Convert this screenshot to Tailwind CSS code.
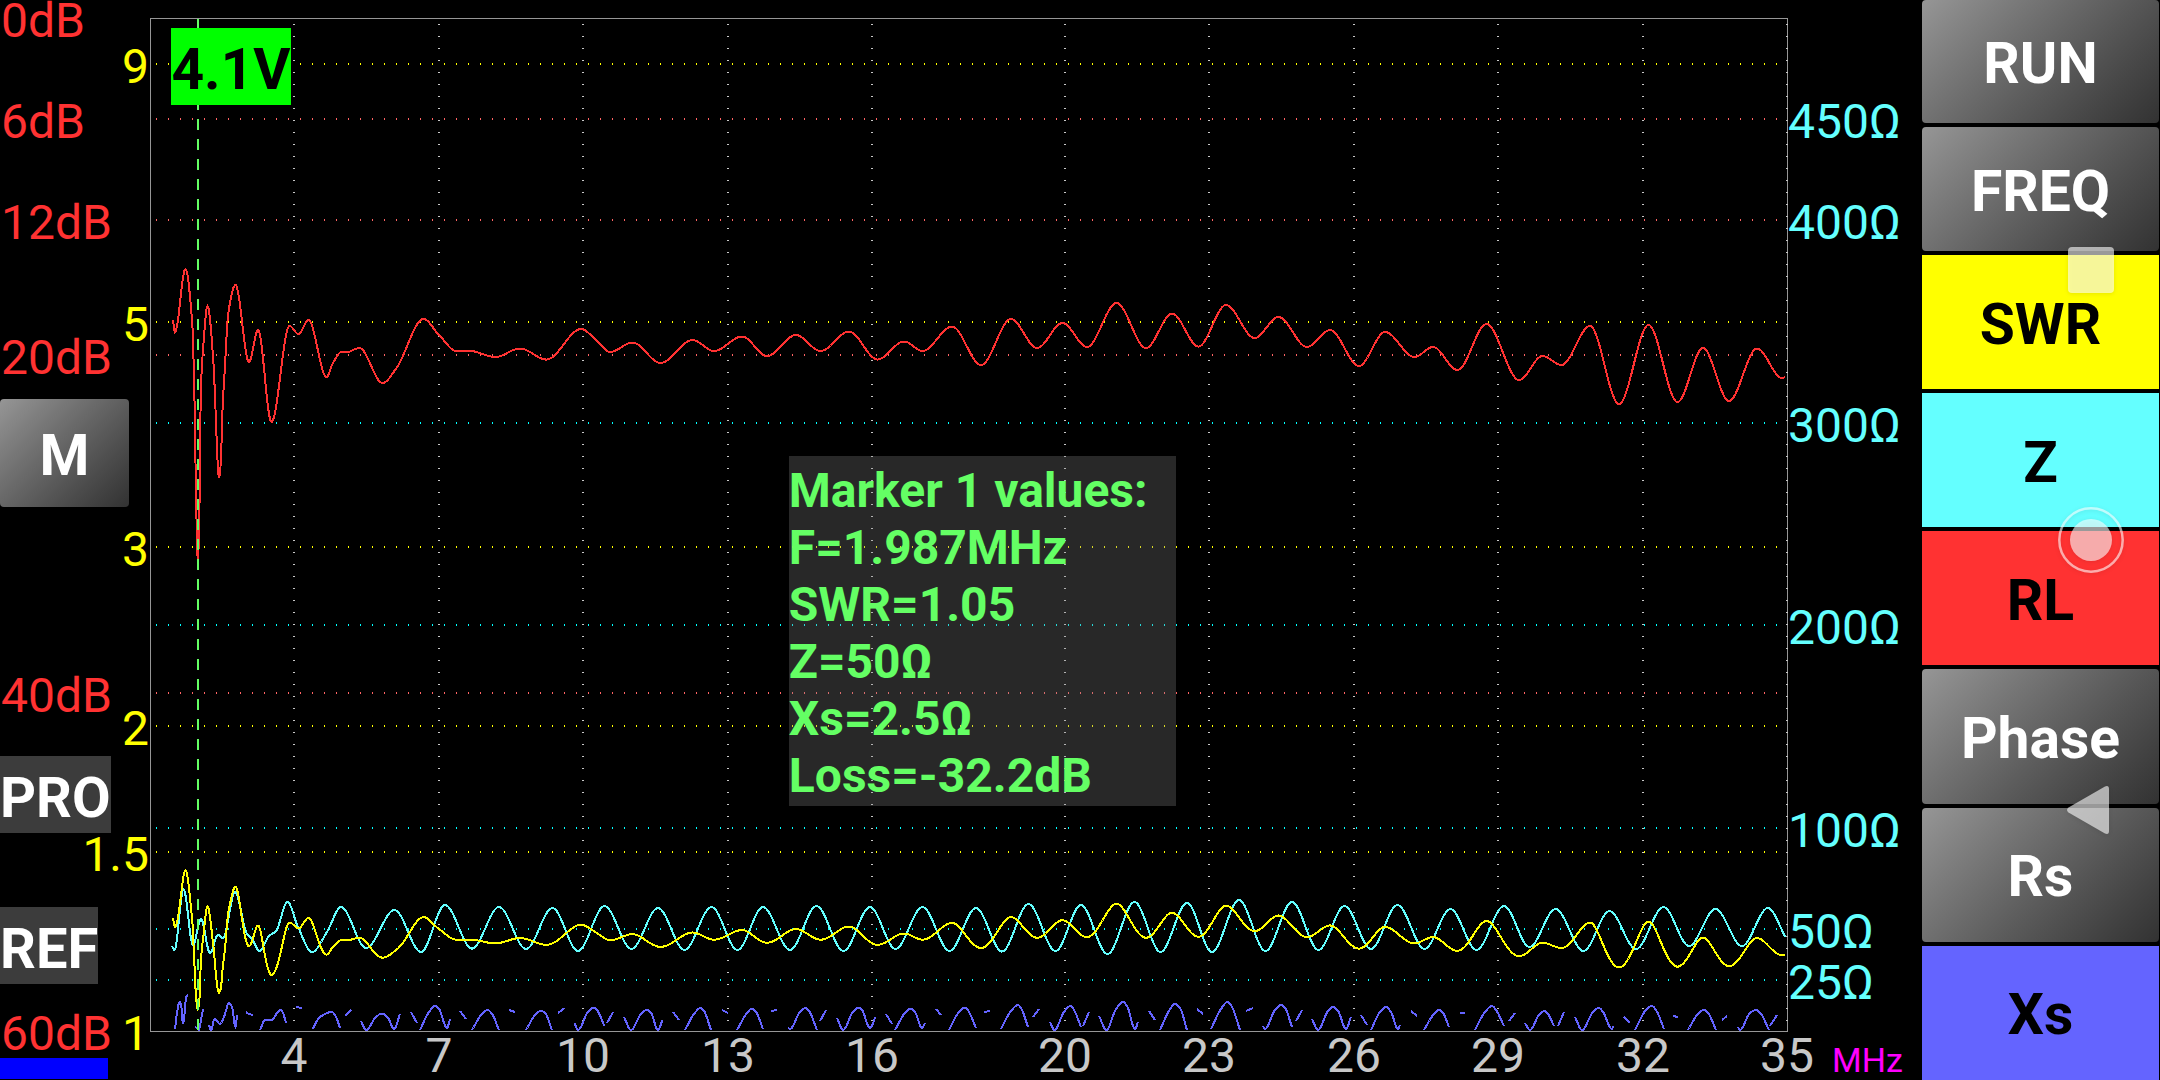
<!DOCTYPE html>
<html lang="en">
<head>
<meta charset="utf-8">
<meta name="viewport" content="width=device-width, initial-scale=1">
<title>Antenna analyzer</title>
<script src="https://cdn.jsdelivr.net/npm/@tailwindcss/browser@4"></script>
</head>
<body class="bg-black font-['Roboto',sans-serif] text-5xl leading-none text-white">
<main class="relative flex h-screen overflow-hidden">

  <!-- Left gutter: return loss scale, SWR scale, mode buttons -->
  <aside class="relative grid w-[150px] shrink-0 grid-rows-[399fr_108px_249fr_77px_74fr_77px_74fr_21px_1fr] justify-items-start">
    <div id="loss-scale" class="absolute inset-x-0 top-[18px] bottom-[49px] text-[#ff3232]"></div>
    <div id="swr-scale" class="absolute inset-x-0 top-[18px] bottom-[49px] text-[#ffff00]"></div>
    <button type="button" class="row-start-2 w-[129px] rounded-sm bg-linear-135 from-[#969696] to-[#323232] pt-1 text-[57px] font-bold">M</button>
    <button type="button" class="relative row-start-4 bg-[#3c3c3c] pt-1.5 text-[56px] font-bold">PRO</button>
    <button type="button" class="relative row-start-6 bg-[#3c3c3c] pt-1.5 text-[56px] font-bold">REF</button>
    <div class="row-start-8 w-[108px] bg-[#0000ff]"></div>
  </aside>

  <!-- Plot and frequency axis -->
  <section class="flex min-w-0 grow flex-col pt-[18px]">
    <div class="relative min-h-0 grow">
      <svg id="plot" class="absolute inset-0 size-full" viewBox="150 18 1638 1014" preserveAspectRatio="none" fill="none" shape-rendering="crispEdges" role="img" aria-label="SWR, impedance, return loss and reactance against frequency">
        <rect x="150.5" y="18.5" width="1637" height="1013" stroke="#969696"/>
        <g id="grid" stroke-width="2" stroke-dasharray="1 11"></g>
        <path id="xs" stroke="#6464ff" stroke-width="2"/>
        <path id="z" stroke="#64ffff" stroke-width="2"/>
        <path id="swr" stroke="#ffff00" stroke-width="2"/>
        <path id="rl" stroke="#ff3232" stroke-width="2"/>
        <path d="M198 19V1031" stroke="#64ff64" stroke-width="2" stroke-dasharray="11 9"/>
      </svg>
      <div class="absolute top-[10px] left-[21px] flex h-[77px] w-[120px] items-center justify-center bg-[#00ff00] pt-1.5 text-[57px] font-bold text-black">4.1V</div>
      <div class="absolute top-[43.2%] left-[39%] w-[387px] bg-[#808080]/31 pt-1.5 pb-0.5 leading-[57px] font-bold whitespace-nowrap text-[#64ff64]">
        <p>Marker 1 values:</p>
        <p>F=1.987MHz</p>
        <p>SWR=1.05</p>
        <p>Z=50Ω</p>
        <p>Xs=2.5Ω</p>
        <p>Loss=-32.2dB</p>
      </div>
    </div>
    <div id="freq-scale" class="relative h-12 shrink-0 text-[#c8c8c8]"></div>
  </section>

  <!-- Impedance scale -->
  <aside class="relative flex w-[134px] shrink-0 flex-col justify-end pl-[44px]">
    <div id="ohm-scale" class="absolute inset-x-0 top-[18px] bottom-[49px] text-[#64ffff]"></div>
    <span class="text-[34px] leading-[40px] text-[#ff00ff]">MHz</span>
  </aside>

  <!-- Commands and trace toggles -->
  <nav class="flex w-[238px] shrink-0 flex-col gap-1 pr-px text-[57px] font-bold">
    <button type="button" class="grow-[123] basis-0 rounded-sm bg-linear-135 from-[#969696] to-[#323232] pt-1">RUN</button>
    <button type="button" class="grow-[123] basis-0 rounded-sm bg-linear-135 from-[#969696] to-[#323232] pt-1">FREQ</button>
    <button type="button" class="grow-[134] basis-0 bg-[#ffff00] pt-1 text-black">SWR</button>
    <button type="button" class="grow-[134] basis-0 bg-[#64ffff] pt-1 text-black">Z</button>
    <button type="button" class="grow-[134] basis-0 bg-[#ff3232] pt-1 text-black">RL</button>
    <button type="button" class="grow-[134] basis-0 rounded-sm bg-linear-135 from-[#969696] to-[#323232] pt-1">Phase</button>
    <button type="button" class="grow-[134] basis-0 rounded-sm bg-linear-135 from-[#969696] to-[#323232] pt-1">Rs</button>
    <button type="button" class="grow-[134] basis-0 bg-[#6464ff] pt-1 text-black">Xs</button>
  </nav>

  <!-- Translucent system navigation over the right edge -->
  <div class="absolute inset-y-0 right-[35px] flex w-[68px] flex-col justify-center">
    <button type="button" aria-label="Recent apps" class="flex h-1/4 items-center justify-center">
      <svg class="h-[68px] w-[68px] drop-shadow-sm" viewBox="0 0 68 68"><rect x="11" y="11" width="46" height="46" rx="4" fill="#fff" fill-opacity=".6"/></svg>
    </button>
    <button type="button" aria-label="Home" class="flex h-1/4 items-center justify-center">
      <svg class="h-[68px] w-[68px] drop-shadow-sm" viewBox="0 0 68 68"><circle cx="34" cy="34" r="31.700" fill="none" stroke="#fff" stroke-opacity=".6" stroke-width="2.500"/><circle cx="34" cy="34" r="21" fill="#fff" fill-opacity=".6"/></svg>
    </button>
    <button type="button" aria-label="Back" class="flex h-1/4 items-center justify-center">
      <svg class="h-[68px] w-[68px] drop-shadow-sm" viewBox="0 0 68 68"><path d="M48 10.500Q52 9 52 13V55Q52 59 48 57.500L11.500 36.500Q8.500 34 11.500 31.500Z" fill="#fff" fill-opacity=".6"/></svg>
    </button>
  </div>
</main>

<script>
const LEFT = 150, TOP = 18, WIDTH = 1638, HEIGHT = 1013, BASE = 1031;

// Turning points of each trace, as x, y pairs in plot units
const rl = [173,320, 175,332, 185.5,269, 192,320, 194.3,390, 196,490, 197.8,561, 199.3,520, 200,450, 201,387, 203,350, 207.5,306,
  213.3,360, 216,423, 217.5,460, 219,478, 221,460, 222.3,415, 225,365, 228.3,313, 235.5,285, 249,362, 258,330, 271.5,422, 289.5,326, 298.5,334,
  308.5,320, 326.5,377, 333,363, 341.5,352, 347,352, 359.5,348, 382.5,383, 396.5,368, 423.5,319, 439,335, 456.5,351, 470,351, 495.5,357,
  520,348.5, 546.5,359.5, 581,329, 596,340, 610,352, 632.5,342.5, 660.5,363, 692.5,340, 714,351, 742,336.5, 767,356, 796,335,
  820.5,351, 849,331.5, 877.5,359.5, 904,341.5, 922.5,351, 952,326.5, 981,365, 1011,319, 1037,348, 1062.5,323, 1087,347,
  1116.5,303, 1146,348, 1172,313.5, 1198.5,346.5, 1226,305, 1254.5,338, 1278.5,317, 1307,347, 1330,330, 1359,366, 1385,332,
  1414.5,357, 1433,347, 1457.5,370, 1486.5,324, 1519,380, 1542.5,356, 1561.5,365, 1590,326, 1619,404, 1648.5,325, 1677.5,402,
  1703,348, 1729,401, 1757,348.5, 1782,378, 1785,377];
const z = [172,946, 174.5,950, 183.5,889, 193,945, 201,919, 210,953, 218,935, 223,938, 235,892, 247,934, 252,939, 259.5,951, 269,936,
  276,931, 287.5,902, 298,927, 312,952, 327,932, 341,907, 366,948, 394.5,910, 421,952, 445,905, 472,948.5, 499,907, 526,949,
  552.5,908, 578,951, 604.5,906, 631.5,949, 658,908, 684.5,950, 711.5,907, 737.5,950, 763,907, 790,950, 816.5,906, 843.5,951,
  870,907, 895.5,949, 922.5,907, 949.5,951, 976,908, 1002,951.5, 1028.5,904, 1055.5,951, 1081,905, 1107.5,954, 1134.5,902,
  1160.5,952, 1187,903, 1212,952, 1239,900, 1265.5,951, 1292,902, 1318.5,950, 1344.5,906, 1371,949, 1397.5,905, 1424.5,949,
  1450.5,909, 1476.5,950, 1504,906, 1529.5,947, 1555.5,909, 1583.5,951, 1609.5,911, 1636,949, 1663.5,907, 1689,946, 1715.5,909,
  1742,946, 1768,908, 1785.5,937];
// Reactance is drawn in separate strokes
const xs = [
  [175,1029, 177,1013, 179.5,1002, 181,1004, 183,1024, 185,1009, 186,997, 188,995], [195,1027, 197,1028], [199,1031, 201,1020, 203,1009],
  [209,1025, 211,1030, 214.5,1019, 220,1024, 224,1017, 229,1003, 232,1007, 235.5,1027, 237,1015], [246,1012, 249,1014, 253,1015],
  [260,1030, 265,1020, 271,1020, 280.5,1010, 283,1013, 286,1023], [296,1007, 302,1008], [312.5,1029, 320,1017, 332,1012, 336,1017, 340,1028],
  [345,1016, 351,1010], [361,1021, 366,1030, 376,1017, 382,1013.5, 388,1018, 394,1029, 400,1014], [411,1012, 417,1023],
  [420,1030, 429,1012, 435,1006, 439,1009, 447,1028, 450,1019], [460,1011, 466,1019], [472,1030, 482,1014, 487.5,1010, 492,1014, 499,1030],
  [509,1010, 515,1012], [526,1030, 536,1014, 541,1011, 545,1013, 552,1030], [558,1013, 564.5,1008],
  [574.5,1023, 578,1030, 588,1012, 594,1007.5, 597,1010, 604.5,1026], [607,1023, 613,1012],
  [624,1017, 631,1030, 641,1014, 647,1010, 651,1013, 658,1030, 662.5,1020], [673,1012, 679,1020],
  [685,1030, 694,1014, 700.5,1008, 704,1011, 711,1030], [722,1010, 728,1013], [737,1030, 747,1013, 752,1008.5, 756,1012, 763,1029],
  [771,1011, 777,1010], [788,1028, 790,1029, 800,1012, 805.5,1008, 809,1011, 817,1030], [820,1021, 826,1010],
  [837,1018, 843,1030, 853,1012, 859,1007.5, 862,1010, 870,1028, 875.5,1017], [886,1014, 892,1024],
  [895,1030, 905,1013, 911,1008.5, 915,1012, 922,1028, 925,1023], [936,1009, 941,1015], [949,1030, 959,1012, 965,1007.5, 969,1012, 976,1028],
  [984,1012, 990,1011], [1001,1029, 1011,1011, 1018,1005, 1021,1008, 1028,1027], [1033,1017, 1039,1009],
  [1050,1022, 1054.5,1030, 1064,1012, 1070.5,1006, 1074,1010, 1081,1027], [1083,1026, 1089,1012],
  [1099,1016, 1106.5,1030, 1116,1009, 1123,1002, 1127,1006, 1135,1029, 1138,1022], [1149,1011, 1155,1020],
  [1160,1030, 1169,1011, 1175,1004, 1180,1008, 1187,1030], [1197,1009, 1203,1014], [1211,1029, 1221,1009, 1227.5,1002, 1232,1007, 1240,1030],
  [1246,1011, 1253,1008], [1263,1026, 1265,1029, 1275,1010, 1281,1005, 1285,1008, 1292,1027], [1296,1021, 1302,1010],
  [1312,1019, 1318,1030, 1328,1011, 1333,1007, 1338,1011, 1346,1029, 1351,1017], [1361,1015, 1367,1025],
  [1371,1030, 1380,1012, 1386,1007, 1391,1012, 1398,1029, 1400,1025], [1411,1011, 1417,1016],
  [1424,1030, 1434,1014, 1439,1010, 1443,1013, 1449,1027], [1460,1013, 1465,1013], [1475,1030, 1485,1012, 1492,1006, 1496,1010, 1504,1026],
  [1509,1021, 1515,1013], [1525,1023, 1530,1030, 1539,1015, 1544.5,1011, 1548,1014, 1554,1026], [1558,1026, 1564,1012],
  [1575,1017, 1582,1030, 1593,1012, 1599,1008, 1603,1012, 1612,1029, 1613,1026], [1624,1017, 1630,1023],
  [1635,1030, 1646,1010, 1652,1006, 1656,1010, 1664,1029], [1673,1016, 1678,1017], [1688,1030, 1698,1014, 1704,1010, 1708,1013, 1716,1030],
  [1722,1020, 1727,1016], [1738,1027, 1740,1030, 1750,1013, 1756,1010, 1761,1014, 1769,1030], [1770,1026, 1777,1015]];

// Monotone cubic interpolation, sampled every half unit
function sample(flat) {
  const p = [];
  for (let i = 0; i < flat.length; i += 2) p.push([flat[i], flat[i + 1]]);
  const d = p.slice(1).map((q, i) => (q[1] - p[i][1]) / (q[0] - p[i][0]));
  const m = p.map((_, i) => i === 0 ? d[0] : i === d.length ? d[i - 1]
    : d[i - 1] * d[i] <= 0 ? 0 : 2 * d[i - 1] * d[i] / (d[i - 1] + d[i]));
  const out = [p[0]];
  for (let i = 0; i < d.length; i++) {
    const h = p[i + 1][0] - p[i][0], n = Math.max(2, Math.round(h * 2));
    for (let k = 1; k <= n; k++) {
      const t = k / n, u = 1 - t;
      out.push([p[i][0] + t * h, p[i][1] * (1 + 2 * t) * u * u + m[i] * h * t * u * u
        + p[i + 1][1] * t * t * (3 - 2 * t) - m[i + 1] * h * t * t * u]);
    }
  }
  return out;
}
const path = pts => 'M' + pts.map(q => q[0].toFixed(1) + ' ' + q[1].toFixed(1)).join('L');
const swrY = s => BASE - 441 * Math.log(s);
// SWR follows from return loss
const toSwr = ([x, y]) => {
  const g = 10 ** (-(y - TOP) * 60 / HEIGHT / 20);
  return [x, swrY((1 + g) / (1 - g))];
};
const set = (id, d) => document.getElementById(id).setAttribute('d', d);
const loss = sample(rl);
set('rl', path(loss));
set('swr', path(loss.map(toSwr)));
set('z', path(sample(z)));
set('xs', xs.map(s => path(sample(s))).join(''));

// Scales: label and position in plot units
const freq = [['4',294],['7',439],['10',583],['13',728],['16',872],['20',1065],['23',1209],['26',1354],['29',1498],['32',1643],['35',1787]];
const db = [['0dB',18],['6dB',119],['12dB',220],['20dB',355],['40dB',693],['60dB',1031]];
const swr = [['9',64],['5',322],['3',547],['2',726],['1.5',852],['1',1031]];
const ohm = [['450Ω',119],['400Ω',220],['300Ω',423],['200Ω',625],['100Ω',828],['50Ω',929],['25Ω',980]];

const line = (d, c) => `<path d="${d}" stroke="${c}"/>`;
const across = (y, c) => line(`M156 ${y}H1777`, c);
document.getElementById('grid').innerHTML =
  freq.map(([, x]) => line(`M${x} 24V1021`, '#c8c8c8')).join('') +
  ohm.slice(2).map(([, y]) => across(y, '#00ffff')).join('') +
  db.slice(1, -1).map(([, y]) => across(y, '#ff6464')).join('') +
  swr.slice(0, -1).map(([, y]) => across(y, '#ffff00')).join('');

const rows = (id, list, cls) => document.getElementById(id).innerHTML = list.map(([t, y]) =>
  `<span class="${cls}" style="top:${(y - TOP) / HEIGHT * 100}%">${t}</span>`).join('');
rows('loss-scale', db, 'absolute left-px mt-[3px] -translate-y-1/2');
rows('swr-scale', swr, 'absolute right-px mt-[3px] -translate-y-1/2');
rows('ohm-scale', ohm, 'absolute left-0 mt-[3px] -translate-y-1/2');
document.getElementById('freq-scale').innerHTML = freq.map(([t, x]) =>
  `<span class="absolute top-0 -translate-x-1/2" style="left:${(x - LEFT) / WIDTH * 100}%">${t}</span>`).join('');
</script>
</body>
</html>
